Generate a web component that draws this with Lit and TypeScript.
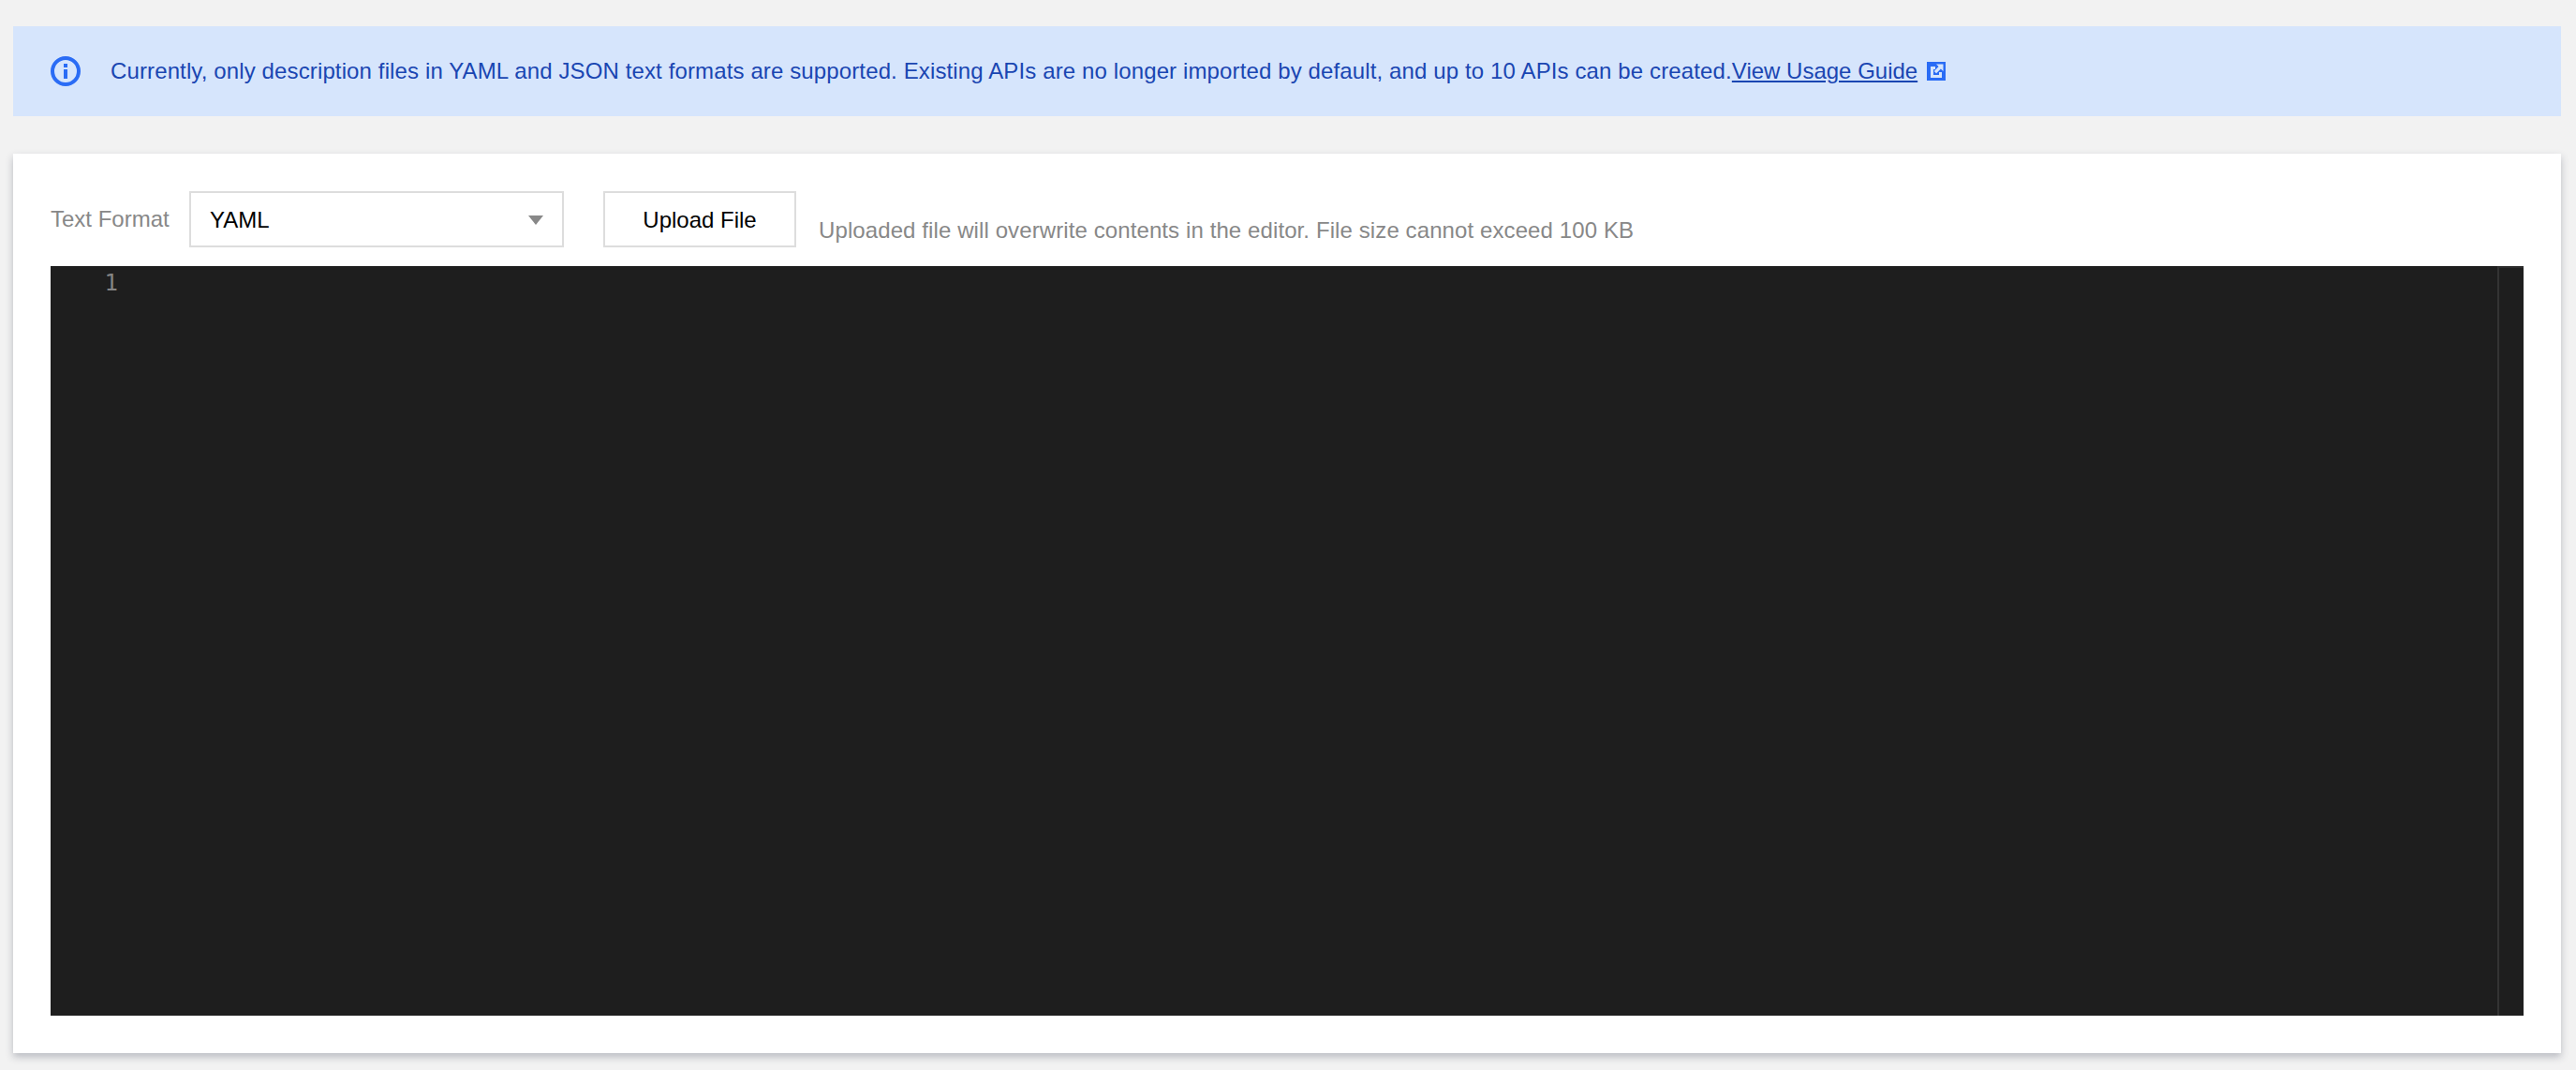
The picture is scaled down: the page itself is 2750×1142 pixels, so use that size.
import { LitElement, html, css } from "lit";
import { customElement } from "lit/decorators.js";

@customElement("app-root")
export class AppRoot extends LitElement {
  static styles = css`
    :host { display: block; min-height: 1142px; background: #f2f2f2; box-sizing: border-box; padding: 28px 16px 18px 14px; font-family: "Liberation Sans", Arial, sans-serif; font-size: 24px; }
    .banner { height: 96px; box-sizing: border-box; background: #d6e5fc; color: #1a46b2; display: flex; align-items: center; padding-left: 40px; margin-bottom: 40px; }
    .info { width: 32px; height: 32px; margin-right: 32px; flex: none; }
    .ext { width: 20px; height: 20px; margin-left: 10px; flex: none; }
    .banner a { color: inherit; text-decoration: underline; }
    .spaced { letter-spacing: 0.125px; }
    .card { height: 960px; box-sizing: border-box; background: #fff; box-shadow: 0 4px 8px rgba(54,58,80,.3); padding: 40px; }
    .toolbar { display: flex; height: 60px; margin-bottom: 20px; }
    .label { color: #888; width: 148px; line-height: 60px; flex: none; }
    .select { width: 400px; height: 60px; box-sizing: border-box; border: 2px solid #ddd; display: flex; align-items: center; justify-content: space-between; padding: 2px 20px 0; color: #000; flex: none; }
    .arrow { width: 0; height: 0; border-left: 8px solid transparent; border-right: 8px solid transparent; border-top: 10px solid #888; }
    .btn { margin-left: 42px; width: 206px; height: 60px; box-sizing: border-box; border: 2px solid #ddd; background: #fff; color: #000; display: flex; align-items: center; justify-content: center; padding-top: 2px; flex: none; }
    .hint { color: #888; margin-left: 24px; line-height: 60px; padding-top: 12px; white-space: nowrap; letter-spacing: 0.1px; }
    .editor { height: 800px; background: #1e1e1e; display: flex; }
    .gutter { width: 72px; text-align: right; color: #858585; font-family: "DejaVu Sans Mono", monospace; font-size: 24px; line-height: 36px; flex: none; }
    .body { flex: 1; }
    .ruler { width: 26px; border-left: 2px solid #333; border-top: 2px solid #2c2c2c; flex: none; }
  `;
  render() {
    return html`
      <div class="banner">
        <svg class="info" viewBox="0 0 32 32" fill="none"><circle cx="16" cy="16" r="14" stroke="#2a6cf5" stroke-width="4"/><rect x="14" y="8" width="4" height="4" fill="#2a6cf5"/><rect x="14" y="14" width="4" height="10" fill="#2a6cf5"/></svg>
        <span class="spaced">Currently, only description files in YAML and JSON text formats are supported. Existing APIs are no longer imported by default, and up to 10 APIs can be created.</span><a>View Usage Guide</a>
        <svg class="ext" viewBox="0 0 20 20"><rect width="20" height="20" fill="#2a6cf5"/><path d="M4 5h5v3H7v6h6v-3h3v6H4z M10 2.5h7.5V10l-2.6-2.6-4.8 4.8-2.3-2.3 4.8-4.8z" fill="#d6e5fc"/></svg>
      </div>
      <div class="card">
        <div class="toolbar">
          <div class="label">Text Format</div>
          <div class="select"><span>YAML</span><span class="arrow"></span></div>
          <div class="btn">Upload File</div>
          <div class="hint">Uploaded file will overwrite contents in the editor. File size cannot exceed 100 KB</div>
        </div>
        <div class="editor">
          <div class="gutter">1</div>
          <div class="body"></div>
          <div class="ruler"></div>
        </div>
      </div>
    `;
  }
}
